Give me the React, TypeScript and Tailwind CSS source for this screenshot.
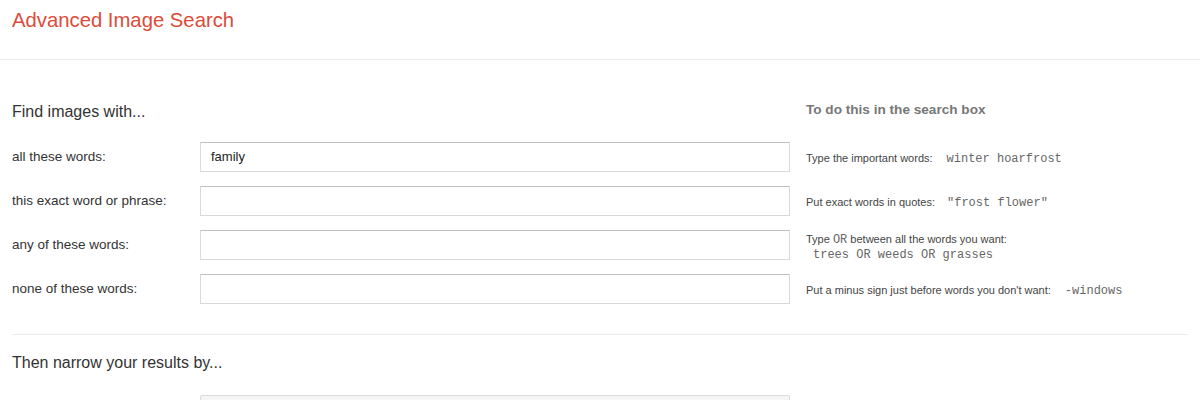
import React from "react";

const rows = [
  { label: "all these words:", value: "family", hint: "important" },
  { label: "this exact word or phrase:", value: "", hint: "exact" },
  { label: "any of these words:", value: "", hint: "or" },
  { label: "none of these words:", value: "", hint: "minus" },
];

const mono = "font-['Liberation_Mono',monospace] text-[12px] text-[#666]";

function Hint({ kind }: { kind: string }) {
  if (kind === "important")
    return (
      <div>
        Type the important words:<span className={`${mono} ml-[14px]`}>winter hoarfrost</span>
      </div>
    );
  if (kind === "exact")
    return (
      <div>
        Put exact words in quotes:<span className={`${mono} ml-[12px]`}>"frost flower"</span>
      </div>
    );
  if (kind === "or")
    return (
      <div className="leading-[15px]">
        <div>
          Type <span className={mono}>OR</span> between all the words you want:
        </div>
        <div className={`${mono} pl-[7px]`}>trees OR weeds OR grasses</div>
      </div>
    );
  return (
    <div>
      Put a minus sign just before words you don't want:<span className={`${mono} ml-[14px]`}>-windows</span>
    </div>
  );
}

export default function App() {
  return (
    <div className="w-[1200px] h-[400px] overflow-hidden bg-white font-['Liberation_Sans',Arial,sans-serif]">
      <div className="h-[60px] border-b border-[#ebebeb] px-3 pt-[8px]">
        <h1 className="text-[20.3px] leading-[24px] text-[#dd4b39]">Advanced Image Search</h1>
      </div>
      <div className="px-3">
        <div className="flex pt-[42px]">
          <div className="w-[778px]">
            <h2 className="text-[16px] leading-[20px] text-[#333]">Find images with...</h2>
            <div className="mt-[13px]">
              {rows.map((r) => (
                <div key={r.label} className="flex h-[44px] items-center">
                  <div className="w-[188px] text-[13.5px] text-[#333]">{r.label}</div>
                  <div className="flex h-[30px] w-[590px] items-center border border-[#d9d9d9] border-t-[#c0c0c0] bg-white px-[10px] text-[13px] text-[#222]">
                    {r.value}
                  </div>
                </div>
              ))}
            </div>
          </div>
          <div className="ml-[16px] flex-1">
            <h3 className="pt-[1px] text-[13.6px] font-bold leading-[14px] text-[#777]">To do this in the search box</h3>
            <div className="mt-[20px] text-[11px] text-[#444]">
              {rows.map((r) => (
                <div key={r.hint} className="flex h-[44px] items-center">
                  <Hint kind={r.hint} />
                </div>
              ))}
            </div>
          </div>
        </div>
        <div className="mt-[21px] border-t border-[#ebebeb]" />
        <h2 className="mt-[18px] text-[16px] leading-[20px] text-[#333]">Then narrow your results by...</h2>
        <div className="mt-[22px] ml-[188px] h-[30px] w-[590px] rounded-[2px] border border-[#dcdcdc] bg-[#f5f5f5]" />
      </div>
    </div>
  );
}
